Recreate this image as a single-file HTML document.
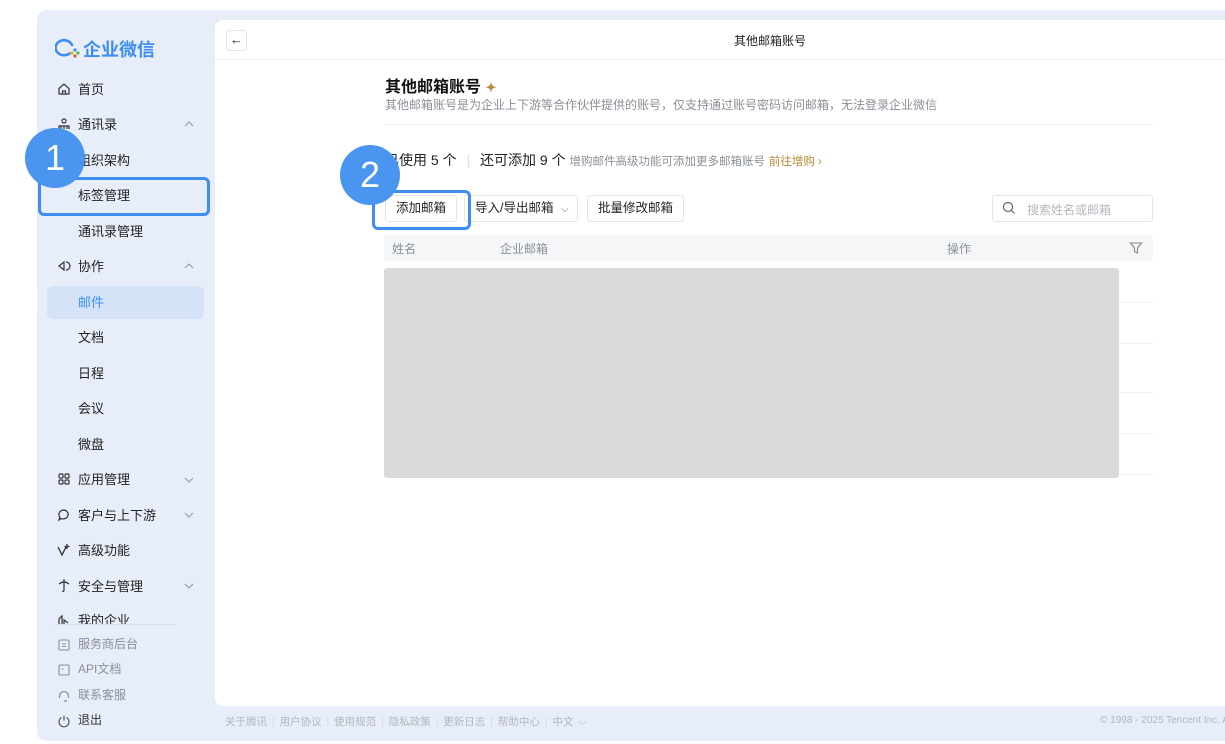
<!DOCTYPE html>
<html><head><meta charset="utf-8"><style>
*{box-sizing:border-box;margin:0;padding:0}
body{width:1225px;height:744px;background:#fff;font-family:"Liberation Sans","Noto Sans CJK SC",sans-serif;position:relative;overflow:hidden;color:#222}
.frame{position:absolute;left:37px;top:10px;width:1200px;height:731px;background:#e8eef9;border-radius:10px 0 0 10px}
.panel{position:absolute;left:215px;top:20px;width:1015px;height:686px;background:#fff;border-radius:8px 0 0 8px}
.abs{position:absolute}
.nav{position:absolute;left:78px;font-size:13px;color:#222;white-space:nowrap;margin-top:-2px}
.ico{position:absolute;left:57px;width:14px;height:14px}
.chev{position:absolute;left:184px;width:10px;height:10px}
.foot{position:absolute;left:78px;font-size:12px;color:#8a8f99;margin-top:-2px}
.btn{position:absolute;top:195px;height:27px;border:1px solid #e3e5e9;border-radius:3px;font-size:12.5px;color:#222;line-height:25px;padding:0 10px;background:#fff;white-space:nowrap}
.hl{position:absolute;border:3px solid #3d8ef0;border-radius:6px}
.badge{position:absolute;width:60px;height:60px;border-radius:50%;background:#4a95ef;color:#fff;font-size:36px;text-align:center;line-height:60px;font-family:"Liberation Sans",sans-serif}
.rl{position:absolute;left:384px;width:769px;height:1px;background:#eef0f2}
</style></head><body>
<div class="frame"></div>
<div class="panel"></div>

<!-- logo -->
<svg class="abs" style="left:55px;top:38px" width="26" height="22" viewBox="0 0 26 22"><path d="M14.5 15.5A8.5 7.5 0 1 1 17 7" fill="none" stroke="#3d8ef0" stroke-width="2.6" stroke-linecap="round"/><circle cx="17" cy="15" r="1.6" fill="#f5a623"/><circle cx="20" cy="12" r="1.6" fill="#3d8ef0"/><circle cx="20" cy="18" r="1.6" fill="#e94e3c"/><circle cx="23" cy="15" r="1.6" fill="#47b84a"/></svg>
<div class="abs" style="left:83px;top:36px;font-size:18px;font-weight:bold;color:#3d8ef0">企业微信</div>

<!-- sidebar -->
<svg class="ico" style="top:82px" viewBox="0 0 14 14"><path d="M2 6.5L7 2l5 4.5V12H2z M5.5 12V9h3v3" fill="none" stroke="#333" stroke-width="1.2"/></svg>
<div class="nav" style="top:81px">首页</div>
<svg class="ico" style="top:117px" viewBox="0 0 14 14"><circle cx="7" cy="4" r="2" fill="none" stroke="#333" stroke-width="1.2"/><path d="M2 12v-3h10v3M4 9v3M7 9v3M10 9v3" fill="none" stroke="#333" stroke-width="1.2"/></svg>
<div class="nav" style="top:116px">通讯录</div>
<svg class="chev" style="top:119px" viewBox="0 0 10 10"><path d="M1 7l4-4 4 4" fill="none" stroke="#999" stroke-width="1.1"/></svg>
<div class="nav" style="top:152px">组织架构</div>
<div class="nav" style="top:187px">标签管理</div>
<div class="nav" style="top:223px">通讯录管理</div>
<svg class="ico" style="top:259px" viewBox="0 0 14 14"><path d="M2 7l5-4v8z M9 3a4 4 0 0 1 0 8" fill="none" stroke="#333" stroke-width="1.2"/></svg>
<div class="nav" style="top:258px">协作</div>
<svg class="chev" style="top:261px" viewBox="0 0 10 10"><path d="M1 7l4-4 4 4" fill="none" stroke="#999" stroke-width="1.1"/></svg>
<div class="abs" style="left:47px;top:286px;width:157px;height:33px;background:#d5e3f8;border-radius:6px"></div>
<div class="nav" style="top:294px;color:#3d8ef0">邮件</div>
<div class="nav" style="top:329px">文档</div>
<div class="nav" style="top:365px">日程</div>
<div class="nav" style="top:400px">会议</div>
<div class="nav" style="top:436px">微盘</div>
<svg class="ico" style="top:472px" viewBox="0 0 14 14"><g fill="none" stroke="#333" stroke-width="1.2"><rect x="2" y="2" width="4" height="4" rx="1"/><rect x="8" y="2" width="4" height="4" rx="1"/><rect x="2" y="8" width="4" height="4" rx="1"/><rect x="8" y="8" width="4" height="4" rx="1"/></g></svg>
<div class="nav" style="top:471px">应用管理</div>
<svg class="chev" style="top:475px" viewBox="0 0 10 10"><path d="M1 3l4 4 4-4" fill="none" stroke="#999" stroke-width="1.1"/></svg>
<svg class="ico" style="top:508px" viewBox="0 0 14 14"><path d="M7 2a5 4.5 0 1 1-3 8.5L2 12l.8-3A5 4.5 0 0 1 7 2z" fill="none" stroke="#333" stroke-width="1.2"/></svg>
<div class="nav" style="top:507px">客户与上下游</div>
<svg class="chev" style="top:510px" viewBox="0 0 10 10"><path d="M1 3l4 4 4-4" fill="none" stroke="#999" stroke-width="1.1"/></svg>
<svg class="ico" style="top:543px" viewBox="0 0 14 14"><path d="M1 4l4 8 4-8M10 1v5M7.5 3.5h5" fill="none" stroke="#333" stroke-width="1.3"/></svg>
<div class="nav" style="top:542px">高级功能</div>
<svg class="ico" style="top:578px" viewBox="0 0 14 14"><path d="M7 1v3M2 6q5-4 10 0M7 4v8q0 2-2 1" fill="none" stroke="#333" stroke-width="1.2"/></svg>
<div class="nav" style="top:578px">安全与管理</div>
<svg class="chev" style="top:581px" viewBox="0 0 10 10"><path d="M1 3l4 4 4-4" fill="none" stroke="#999" stroke-width="1.1"/></svg>
<div class="abs" style="left:40px;top:608px;width:175px;height:16px;overflow:hidden"><div class="nav" style="left:38px;top:4px">我的企业</div><svg class="abs" style="left:17px;top:5px" width="14" height="14" viewBox="0 0 14 14"><path d="M2 12V6l3-3v9M7 12V7l4 3" fill="none" stroke="#333" stroke-width="1.2"/></svg></div>
<div class="abs" style="left:55px;top:624px;width:120px;height:1px;background:#d7dde8"></div>
<svg class="ico" style="top:638px" viewBox="0 0 14 14"><rect x="2" y="2" width="10" height="10" rx="1.5" fill="none" stroke="#8a8f99" stroke-width="1.1"/><path d="M5 6h4M5 8.5h4" stroke="#8a8f99"/></svg>
<div class="foot" style="top:637px">服务商后台</div>
<svg class="ico" style="top:663px" viewBox="0 0 14 14"><rect x="2" y="2" width="10" height="10" rx="1.5" fill="none" stroke="#8a8f99" stroke-width="1.1"/><path d="M4.5 6h2" stroke="#8a8f99"/></svg>
<div class="foot" style="top:662px">API文档</div>
<svg class="ico" style="top:689px" viewBox="0 0 14 14"><path d="M2.5 9V7a4.5 4.5 0 0 1 9 0v2M7 12h3" fill="none" stroke="#8a8f99" stroke-width="1.2"/></svg>
<div class="foot" style="top:688px">联系客服</div>
<svg class="ico" style="top:714px" viewBox="0 0 14 14"><path d="M4.5 3.5a5 5 0 1 0 5 0M7 1.5v5" fill="none" stroke="#555" stroke-width="1.2"/></svg>
<div class="foot" style="top:713px;color:#333">退出</div>

<!-- header -->
<div class="abs" style="left:226px;top:30px;width:21px;height:21px;border:1px solid #e3e5e9;border-radius:4px;font-size:13px;text-align:center;line-height:18px">←</div>
<div class="abs" style="left:215px;top:59px;width:1010px;height:1px;background:#f0f1f3"></div>
<div class="abs" style="left:734px;top:32px;font-size:12px;color:#222">其他邮箱账号</div>

<div class="abs" style="left:385px;top:73px;font-size:16px;font-weight:bold;color:#111">其他邮箱账号 <span style="color:#b8893a;font-size:13px">✦</span></div>
<div class="abs" style="left:385px;top:96px;font-size:12px;color:#8a8f99">其他邮箱账号是为企业上下游等合作伙伴提供的账号，仅支持通过账号密码访问邮箱，无法登录企业微信</div>
<div class="abs" style="left:385px;top:124px;width:768px;height:1px;background:#eef0f2"></div>

<div class="abs" style="left:385px;top:150px;font-size:14px;color:#222;white-space:nowrap">已使用 5 个 <span style="color:#ddd;margin:0 6px">|</span> 还可添加 9 个 <span style="font-size:11.5px;color:#8a8f99">增购邮件高级功能可添加更多邮箱账号</span> <span style="font-size:11.5px;color:#b8893a">前往增购 ›</span></div>

<div class="btn" style="left:385px">添加邮箱</div>
<div class="btn" style="left:464px;width:114px">导入/导出邮箱 <span style="font-size:10px;color:#666;margin-left:4px">⌵</span></div>
<div class="btn" style="left:587px">批量修改邮箱</div>
<div class="abs" style="left:992px;top:195px;width:161px;height:27px;border:1px solid #e3e5e9;border-radius:3px"></div>
<svg class="abs" style="left:1002px;top:201px" width="14" height="14" viewBox="0 0 14 14"><circle cx="6" cy="6" r="4.5" fill="none" stroke="#666" stroke-width="1.2"/><path d="M9.5 9.5l3 3" stroke="#666" stroke-width="1.2"/></svg>
<div class="abs" style="left:1027px;top:201px;font-size:12px;color:#b3b7bd">搜索姓名或邮箱</div>

<div class="abs" style="left:384px;top:235px;width:769px;height:26px;background:#f5f6f7;border-radius:3px"></div>
<div class="abs" style="left:392px;top:240px;font-size:12px;color:#8a8f99">姓名</div>
<div class="abs" style="left:500px;top:240px;font-size:12px;color:#8a8f99">企业邮箱</div>
<div class="abs" style="left:947px;top:240px;font-size:12px;color:#8a8f99">操作</div>
<svg class="abs" style="left:1129px;top:241px" width="14" height="14" viewBox="0 0 14 14"><path d="M1.5 2h11L8.5 7v5l-3-1.5V7z" fill="none" stroke="#888" stroke-width="1.1"/></svg>

<div class="rl" style="top:302px"></div><div class="rl" style="top:343px"></div><div class="rl" style="top:392px"></div><div class="rl" style="top:433px"></div><div class="rl" style="top:474px"></div>
<div class="abs" style="left:384px;top:268px;width:735px;height:210px;background:#d9dadc;border-radius:3px"></div>

<!-- footer -->
<div class="abs" style="left:225px;top:714px;font-size:10.5px;color:#b3b7bd;white-space:nowrap;word-spacing:2px">关于腾讯 <span style="color:#d5d9e0">|</span> 用户协议 <span style="color:#d5d9e0">|</span> 使用规范 <span style="color:#d5d9e0">|</span> 隐私政策 <span style="color:#d5d9e0">|</span> 更新日志 <span style="color:#d5d9e0">|</span> 帮助中心 <span style="color:#d5d9e0">|</span> 中文 ⌵</div>
<div class="abs" style="left:1100px;top:715px;font-size:10px;color:#b3b7bd;white-space:nowrap">© 1998 - 2025 Tencent Inc. All</div>

<!-- annotations -->
<div class="hl" style="left:38px;top:177px;width:172px;height:39px"></div>
<div class="badge" style="left:25px;top:128px">1</div>
<div class="hl" style="left:372px;top:190px;width:99px;height:40px"></div>
<div class="badge" style="left:340px;top:145px">2</div>
</body></html>
